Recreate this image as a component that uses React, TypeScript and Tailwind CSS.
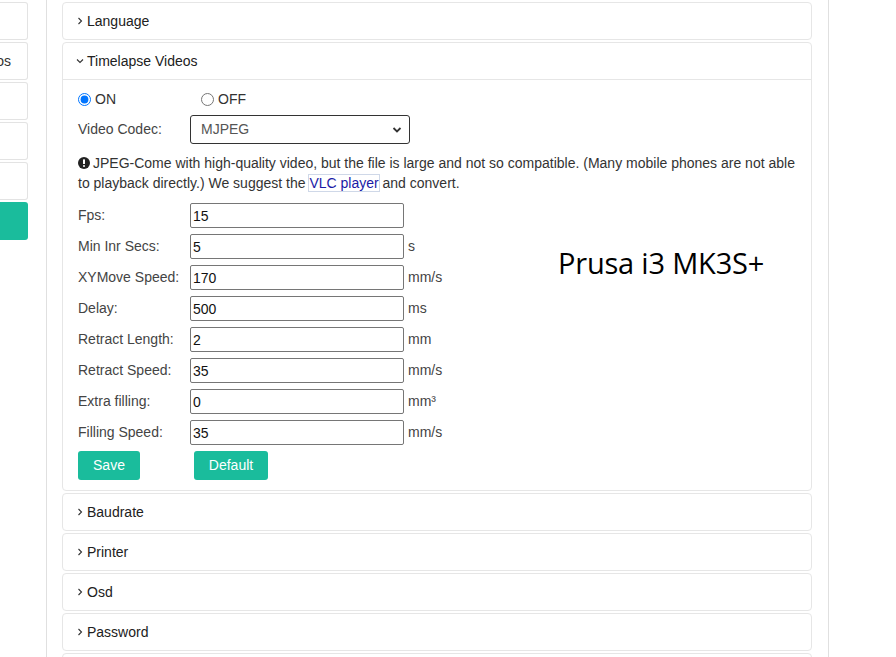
import React from 'react';

const rows = [
    { label: 'Fps:', value: '15', unit: '' },
    { label: 'Min Inr Secs:', value: '5', unit: 's' },
    { label: 'XYMove Speed:', value: '170', unit: 'mm/s' },
    { label: 'Delay:', value: '500', unit: 'ms' },
    { label: 'Retract Length:', value: '2', unit: 'mm' },
    { label: 'Retract Speed:', value: '35', unit: 'mm/s' },
    { label: 'Extra filling:', value: '0', unit: 'mm³' },
    { label: 'Filling Speed:', value: '35', unit: 'mm/s' },
];

const Chevron = ({ open }: { open?: boolean }) => (
    <svg width="8" height="8" viewBox="0 0 8 8" className="mr-[3px] shrink-0">
        {open ? (
            <path d="M1 2.5 L4 5.5 L7 2.5" fill="none" stroke="#333" strokeWidth="1.1" />
        ) : (
            <path d="M2.5 1 L5.5 4 L2.5 7" fill="none" stroke="#333" strokeWidth="1.1" />
        )}
    </svg>
);

const CollapsedCard = ({ title }: { title: string }) => (
    <div className="h-[38px] shrink-0 border border-[#e6e6e6] rounded-[4px] flex items-center pl-[13px] text-[14px] text-[#212121]">
        <Chevron />
        {title}
    </div>
);

const SideBox = ({ text, active }: { text?: string; active?: boolean }) => (
    <div
        className={`h-[38px] w-[28px] shrink-0 overflow-hidden flex items-center justify-end pr-[16px] rounded-r-[3px] text-[14px] text-[#333] whitespace-nowrap ${
            active ? 'bg-[#1abc9c]' : 'border-y border-r border-[#e3e3e3]'
        }`}
    >
        {text}
    </div>
);

export default function App() {
    return (
        <div className="relative w-[896px] h-[657px] overflow-hidden bg-white flex font-['Liberation_Sans',Arial,sans-serif]">
            {/* left nav (cut off) */}
            <aside className="w-[28px] pt-[2px] flex flex-col gap-[2px] shrink-0">
                <SideBox />
                <SideBox text="Videos" />
                <SideBox />
                <SideBox />
                <SideBox />
                <SideBox active />
            </aside>

            {/* settings column */}
            <main className="ml-[18px] w-[783px] h-full border-x border-[#e0e0e0] pl-[15px] pr-[16px] pt-[2px] flex flex-col gap-[2px]">
                <CollapsedCard title="Language" />

                <div className="shrink-0 border border-[#e6e6e6] rounded-[4px]">
                    <div className="h-[37px] flex items-center pl-[13px] border-b border-[#e6e6e6] text-[14px] text-[#212121]">
                        <Chevron open />
                        Timelapse Videos
                    </div>

                    <div className="pl-[15px] pr-[12px] pt-[10px] pb-[10px] text-[14px] text-[#333]">
                        <div className="h-[18px] flex items-center">
                            <label className="flex items-center w-[123px]">
                                <input type="radio" name="tl" defaultChecked className="m-0 mr-[4px] w-[13px] h-[13px] accent-[#0075ff]" />
                                ON
                            </label>
                            <label className="flex items-center">
                                <input type="radio" name="tl" className="m-0 mr-[4px] w-[13px] h-[13px]" />
                                OFF
                            </label>
                        </div>

                        <div className="mt-[7px] flex items-center">
                            <span className="w-[112px] text-[#444]">Video Codec:</span>
                            <div className="relative w-[220px] h-[29px]">
                                <select className="appearance-none w-full h-full border border-[#333] rounded-[3px] pl-[10px] text-[14px] text-[#555] bg-white">
                                    <option>MJPEG</option>
                                    <option>H.264</option>
                                </select>
                                <svg width="10" height="8" viewBox="0 0 10 8" className="absolute right-[8px] top-[11px] pointer-events-none">
                                    <path d="M1.5 2 L5 5.5 L8.5 2" fill="none" stroke="#333" strokeWidth="1.8" />
                                </svg>
                            </div>
                        </div>

                        <p className="mt-[9px] leading-[20px] text-[#333]">
                            <svg width="12" height="12" viewBox="0 0 12 12" className="inline-block align-[-1px] mr-[3px]">
                                <circle cx="6" cy="6" r="6" fill="#222" />
                                <rect x="5" y="2.3" width="2" height="4.8" rx="0.6" fill="#fff" />
                                <circle cx="6" cy="8.9" r="1" fill="#fff" />
                            </svg>
                            JPEG-Come with high-quality video, but the file is large and not so compatible. (Many mobile phones are not able to playback directly.) We suggest the{' '}
                            <a href="#" className="text-[#1a1aa6] outline outline-1 outline-[#cfd8e8]">VLC player</a> and convert.
                        </p>

                        <div className="mt-[10px] flex flex-col gap-[6px]">
                            {rows.map((r) => (
                                <div key={r.label} className="flex items-center h-[25px]">
                                    <span className="w-[112px] text-[#444]">{r.label}</span>
                                    <input
                                        defaultValue={r.value}
                                        className="w-[214px] h-[25px] border border-[#767676] rounded-[2px] px-[2px] text-[14px] text-[#111]"
                                    />
                                    <span className="ml-[4px] text-[#444]">{r.unit}</span>
                                </div>
                            ))}
                        </div>

                        <div className="mt-[6px] flex items-center">
                            <button className="w-[62px] h-[29px] rounded-[3px] bg-[#1abc9c] text-white text-[14px]">Save</button>
                            <button className="ml-[54px] w-[74px] h-[29px] rounded-[3px] bg-[#1abc9c] text-white text-[14px]">Default</button>
                        </div>
                    </div>
                </div>

                <CollapsedCard title="Baudrate" />
                <CollapsedCard title="Printer" />
                <CollapsedCard title="Osd" />
                <CollapsedCard title="Password" />
                <CollapsedCard title="Network" />
            </main>

            {/* overlaid caption */}
            <div className="absolute left-[558px] top-[241px] text-[29px] text-black font-['Open_Sans',sans-serif] tracking-[-0.2px]">
                Prusa i3 MK3S+
            </div>
        </div>
    );
}
